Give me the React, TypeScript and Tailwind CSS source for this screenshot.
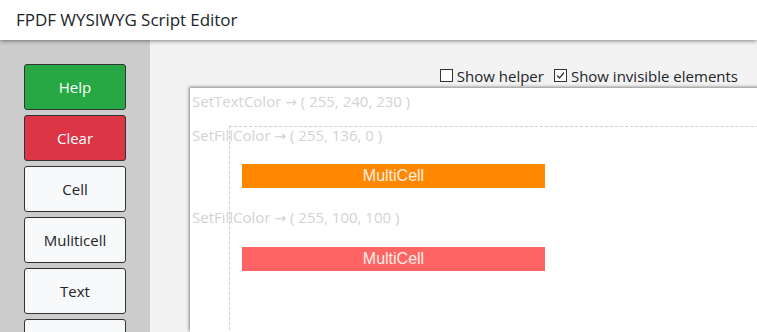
import React, { useState } from "react";

const TOOLS = ["Cell", "Muliticell", "Text"];

export default function App() {
  const [showHelper, setShowHelper] = useState(false);
  const [showInvisible, setShowInvisible] = useState(true);

  return (
    <div className="h-screen flex flex-col overflow-hidden font-['Open_Sans',sans-serif] text-[#212529]">
      <header className="h-[40px] shrink-0 bg-white flex items-center px-[16px] shadow-[0_1px_4px_rgba(0,0,0,0.45)] relative z-10">
        <h1 className="text-[17px] tracking-[-0.05px]">FPDF WYSIWYG Script Editor</h1>
      </header>

      <div className="flex-1 flex min-h-0">
        <aside className="w-[150px] shrink-0 bg-[#cccccc] flex flex-col gap-[5px] pt-[24px] px-[24px]">
          <button className="h-[46px] shrink-0 rounded-[3px] border border-[#333] bg-[#28a745] text-white text-[15px]">
            Help
          </button>
          <button className="h-[46px] shrink-0 rounded-[3px] border border-[#333] bg-[#dc3545] text-white text-[15px]">
            Clear
          </button>
          {TOOLS.map((t) => (
            <button
              key={t}
              className="h-[46px] shrink-0 rounded-[3px] border border-[#333] bg-[#f8f9fa] text-[#212529] text-[15px]"
            >
              {t}
            </button>
          ))}
          <button className="h-[46px] shrink-0 rounded-[3px] border border-[#333] bg-[#f8f9fa]" />
        </aside>

        <main className="flex-1 bg-[#f2f2f2] flex flex-col min-w-0 overflow-hidden pl-[40px]">
          <div className="h-[48px] shrink-0 flex items-end justify-end pr-[19px] pb-[1px] gap-[10px] text-[15px]">
            <label className="flex items-center gap-[4px]">
              <span
                onClick={() => setShowHelper(!showHelper)}
                className="w-[13px] h-[13px] border border-[#333] bg-white flex items-center justify-center"
              >
                {showHelper && <Check />}
              </span>
              Show helper
            </label>
            <label className="flex items-center gap-[4px]">
              <span
                onClick={() => setShowInvisible(!showInvisible)}
                className="w-[13px] h-[13px] border border-[#333] bg-white flex items-center justify-center"
              >
                {showInvisible && <Check />}
              </span>
              Show invisible elements
            </label>
          </div>

          {/* pdf page: items sit at their page coordinates */}
          <div className="relative flex-1 w-[800px] bg-white shadow-[-1px_-1px_3px_rgba(0,0,0,0.45)] text-[15px] text-[#d3d3d3]">
            <div className="absolute left-[39px] top-[38px] w-[700px] h-[400px] border border-dashed border-[#cfcfcf]" />
            <div className="absolute left-[2px] top-[3px] leading-[20px] whitespace-nowrap">
              SetTextColor <span className="font-['DejaVu_Sans',sans-serif] text-[14px]">→</span> ( 255, 240, 230 )
            </div>
            <div className="absolute left-[2px] top-[37px] leading-[20px] whitespace-nowrap">
              SetFillColor <span className="font-['DejaVu_Sans',sans-serif] text-[14px]">→</span> ( 255, 136, 0 )
            </div>
            <div className="absolute left-[52px] top-[76px] w-[303px] h-[24px] bg-[#ff8800] text-[#fff0e6] font-['Liberation_Sans',sans-serif] text-[16px] flex items-center justify-center">
              MultiCell
            </div>
            <div className="absolute left-[2px] top-[119px] leading-[20px] whitespace-nowrap">
              SetFillColor <span className="font-['DejaVu_Sans',sans-serif] text-[14px]">→</span> ( 255, 100, 100 )
            </div>
            <div className="absolute left-[52px] top-[159px] w-[303px] h-[24px] bg-[#ff6464] text-[#fff0e6] font-['Liberation_Sans',sans-serif] text-[16px] flex items-center justify-center">
              MultiCell
            </div>
          </div>
        </main>
      </div>
    </div>
  );
}

function Check() {
  return (
    <svg width="11" height="11" viewBox="0 0 11 11" fill="none" stroke="#333" strokeWidth="1.2">
      <path d="M2 5.5 L4.5 8 L9 2.5" />
    </svg>
  );
}
